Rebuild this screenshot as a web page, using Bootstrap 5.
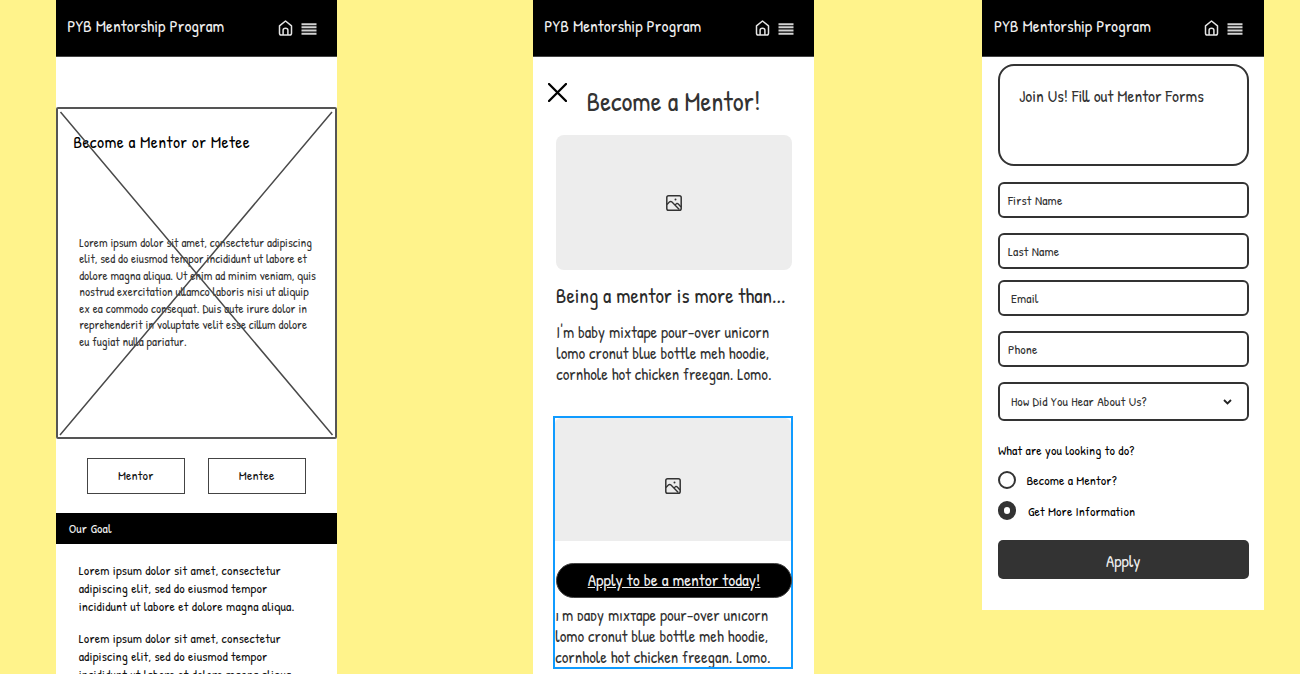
<!DOCTYPE html>
<html lang="en">
<head>
<meta charset="utf-8">
<meta name="viewport" content="width=device-width, initial-scale=1">
<title>PYB Mentorship Program</title>
<link rel="stylesheet" href="https://cdn.jsdelivr.net/npm/bootstrap@5.3.0/dist/css/bootstrap.min.css">
<style>
  body { background: #fff38b; font-family: "Patrick Hand", Lato, sans-serif; color: #000; height: 674px; }
  .board { padding-left: 55.7px; height: 674px; }
  .phone { width: 281.5px; height: 674px; flex: none; background: #fff; }
  .phone-mid { margin-left: 195.6px; }
  .phone-form { margin-left: 168.1px; height: 610px; }
  .topbar { height: 56.5px; background: #000; color: #eee; padding: 0 20.5px 0 11.5px; border-bottom: 1px solid #444; }
  .brand { font-size: 17.2px; letter-spacing: .03px; line-height: 24px; margin-bottom: 4px; }
  .topbar svg { display: block; }
  .menu-icon { margin-top: 2px; }

  .wire { margin-top: 50.5px; height: 332px; border: 2px solid #555; border-radius: 2px; padding: 21px 0 0 15.5px; }
  .wire-cross { inset: 0; width: 100%; height: 100%; }
  .wire-title { font-size: 17.5px; letter-spacing: .38px; line-height: 24px; margin: 0; }
  .wire-text { font-size: 12.67px; line-height: 16.55px; margin: 80.5px 0 0 6px; color: #333; white-space: nowrap; }
  .pick-row { margin-top: 18.5px; padding-left: 31px; gap: 23px; }
  .pick { width: 98px; height: 36.5px; border: 1px solid #444; border-radius: 0; padding: 0 0 2px; font-size: 13.45px; letter-spacing: .15px; color: #111; }
  .goal-bar { margin-top: 18.5px; height: 31px; background: #000; color: #eee; padding-left: 13px; font-size: 13.45px; letter-spacing: .15px; }
  .goal-text { font-size: 13.45px; letter-spacing: .15px; line-height: 18.1px; margin: 0 0 14px 23px; white-space: nowrap; color: #111; }
  .goal-copy { padding-top: 17px; }

  .hero { height: 78.5px; padding: 26px 0 0 15.5px; }
  .hero h1 { font-size: 26.8px; letter-spacing: .08px; line-height: 32px; margin: 2px 0 0 19.3px; color: #333; }
  .pic { background: #ededed; }
  .pic-top { height: 135px; margin: 0 22px 0 23px; border-radius: 8px; }
  .pic-low { height: 123px; }
  .pic-low svg { margin-top: 12px; }
  .more-title { font-size: 20.9px; letter-spacing: .03px; line-height: 26px; margin: 13px 0 0 23px; color: #2b2b2b; }
  .more-text { font-size: 16.5px; letter-spacing: .02px; line-height: 21.1px; margin: 13px 0 0 23.5px; color: #333; white-space: nowrap; }
  .picked { width: 240.5px; height: 253px; margin: 31px 0 0 20px; border: 2.4px solid #109bff; }
  .apply-pill { height: 35.5px; margin: 21.5px -1px 0 1px; border: 1px solid #444; border-radius: 18px; background: #000; color: #eee; padding: 0 0 2px; font-size: 17.3px; }
  .apply-pill:hover { color: #fff; }
  .clipped { height: 54px; margin-top: 14.5px; }
  .clipped .more-text { margin: -7.5px 0 0 .5px; }

  .form-pad { padding: 7.5px 15.2px 0 15.5px; }
  .join { height: 102px; border: 2.4px solid #333; border-radius: 16px; padding: 17px 0 0 19px; font-size: 17.2px; line-height: 26px; color: #333; }
  .field { height: 36.2px; border: 2.4px solid #333; border-radius: 6px; padding: 1px 0 0 8px; color: #333; font-size: 13.45px; letter-spacing: .15px; line-height: 1; }
  .field-in { padding-left: 11px; }
  .gap-a { margin-top: 16px; } .gap-b { margin-top: 14.9px; } .gap-c { margin-top: 10.6px; }
  .pick-how { height: 39.3px; padding-right: 15px; }
  .ask { font-size: 13.45px; letter-spacing: .16px; line-height: 20px; margin: 19px 0 0; }
  .choice { height: 19px; font-size: 13.45px; letter-spacing: .13px; margin-top: 10.4px; }
  .choice + .choice { margin-top: 11.4px; }
  .choice-label { margin-left: 10px; }
  .choice + .choice .choice-label { margin-left: 11.5px; }
  .dot { width: 18.5px; height: 18.5px; border: 2.6px solid #333; border-radius: 50%; flex: none; }
  .dot-on { border-width: 6.2px; }
  .send { height: 39px; margin-top: 20.2px; background: #333; color: #eee; border: 0; border-radius: 5px; padding: 2px 0 0; font-size: 17px; }
</style>
</head>
<body>
<svg class="d-none">
  <symbol id="home" viewBox="0 0 14 16"><path d="M1 5.9 7 1l6 4.900V13.200Q13 15 11.200 15H2.800Q1 15 1 13.200ZM4.600 15V10.200Q4.600 8.200 7 8.200T9.400 10.200V15" fill="none" stroke="#e4e4e4" stroke-width="1.500" stroke-linejoin="round"/></symbol>
  <symbol id="bars" viewBox="0 0 15 12"><path d="M0 1.200H15M0 4.300H15M0 7.500H15M0 10.700H15" stroke="#d2d2d2" stroke-width="1.900"/></symbol>
  <symbol id="image" viewBox="0 0 16 16"><rect x=".8" y=".8" width="14.400" height="14.400" rx="1.800" fill="none" stroke="#333" stroke-width="1.500"/><path d="M1 9.500 3.600 6.800Q4.800 6 6 7L13.300 14.500M8.800 10 10.800 8.500Q11.500 8.200 12.300 9L15 12" fill="none" stroke="#333" stroke-width="1.400"/><circle cx="9.500" cy="4.400" r="1" fill="#333"/></symbol>
</svg>
<main class="board d-flex overflow-hidden">
  <section class="phone overflow-hidden">
    <header class="topbar d-flex align-items-center">
      <span class="brand me-auto">PYB Mentorship Program</span>
      <svg width="15" height="16" class="me-2"><use href="#home"/></svg>
      <svg width="16" height="12" class="menu-icon"><use href="#bars"/></svg>
    </header>
    <div class="wire position-relative">
      <h2 class="wire-title">Become a Mentor or Metee</h2>
      <p class="wire-text">Lorem ipsum dolor sit amet, consectetur adipiscing<br>elit, sed do eiusmod tempor incididunt ut labore et<br>dolore magna aliqua. Ut enim ad minim veniam, quis<br>nostrud exercitation ullamco laboris nisi ut aliquip<br>ex ea commodo consequat. Duis aute irure dolor in<br>reprehenderit in voluptate velit esse cillum dolore<br>eu fugiat nulla pariatur.</p>
      <svg class="wire-cross position-absolute" viewBox="0 0 278 328" preserveAspectRatio="none"><path d="M2.500 3 275 326M274.500 3 2 326" stroke="#4a4a4a" stroke-width="1.500"/></svg>
    </div>
    <div class="pick-row d-flex">
      <button class="btn pick">Mentor</button>
      <button class="btn pick">Mentee</button>
    </div>
    <div class="goal-bar d-flex align-items-center">Our Goal</div>
    <div class="goal-copy">
      <p class="goal-text">Lorem ipsum dolor sit amet, consectetur<br>adipiscing elit, sed do eiusmod tempor<br>incididunt ut labore et dolore magna aliqua.</p>
      <p class="goal-text">Lorem ipsum dolor sit amet, consectetur<br>adipiscing elit, sed do eiusmod tempor<br>incididunt ut labore et dolore magna aliqua.</p>
    </div>
  </section>

  <section class="phone phone-mid overflow-hidden">
    <header class="topbar d-flex align-items-center">
      <span class="brand me-auto">PYB Mentorship Program</span>
      <svg width="15" height="16" class="me-2"><use href="#home"/></svg>
      <svg width="16" height="12" class="menu-icon"><use href="#bars"/></svg>
    </header>
    <div class="hero d-flex align-items-start">
      <svg width="19" height="19"><path d="M1 1 18 18M18 1 1 18" stroke="#000" stroke-width="2.300" stroke-linecap="round"/></svg>
      <h1>Become a Mentor!</h1>
    </div>
    <div class="pic pic-top d-flex align-items-center justify-content-center"><svg width="16" height="16"><use href="#image"/></svg></div>
    <h2 class="more-title">Being a mentor is more than...</h2>
    <p class="more-text">I'm baby mixtape pour-over unicorn<br>lomo cronut blue bottle meh hoodie,<br>cornhole hot chicken freegan. Lomo.</p>
    <div class="picked">
      <div class="pic pic-low rounded-top d-flex align-items-center justify-content-center"><svg width="16" height="16"><use href="#image"/></svg></div>
      <a class="apply-pill d-flex align-items-center justify-content-center text-decoration-underline" href="#">Apply to be a mentor today!</a>
      <div class="clipped overflow-hidden"><p class="more-text">I'm baby mixtape pour-over unicorn<br>lomo cronut blue bottle meh hoodie,<br>cornhole hot chicken freegan. Lomo.</p></div>
    </div>
  </section>

  <section class="phone phone-form overflow-hidden">
    <header class="topbar d-flex align-items-center">
      <span class="brand me-auto">PYB Mentorship Program</span>
      <svg width="15" height="16" class="me-2"><use href="#home"/></svg>
      <svg width="16" height="12" class="menu-icon"><use href="#bars"/></svg>
    </header>
    <div class="form-pad">
      <div class="join">Join Us! Fill out Mentor Forms</div>
      <div class="field gap-a d-flex align-items-center">First Name</div>
      <div class="field gap-b d-flex align-items-center">Last Name</div>
      <div class="field field-in gap-c d-flex align-items-center">Email</div>
      <div class="field gap-b d-flex align-items-center">Phone</div>
      <div class="field field-in pick-how gap-b d-flex align-items-center justify-content-between">How Did You Hear About Us?
        <svg width="9" height="6"><path d="M1 1 4.500 4.500 8 1" fill="none" stroke="#222" stroke-width="1.800"/></svg>
      </div>
      <p class="ask">What are you looking to do?</p>
      <div class="choice d-flex align-items-center"><span class="dot"></span><span class="choice-label">Become a Mentor?</span></div>
      <div class="choice d-flex align-items-center"><span class="dot dot-on"></span><span class="choice-label">Get More Information</span></div>
      <button class="btn send w-100">Apply</button>
    </div>
  </section>
</main>
<script src="https://cdn.jsdelivr.net/npm/bootstrap@5.3.0/dist/js/bootstrap.bundle.min.js"></script>
</body>
</html>
